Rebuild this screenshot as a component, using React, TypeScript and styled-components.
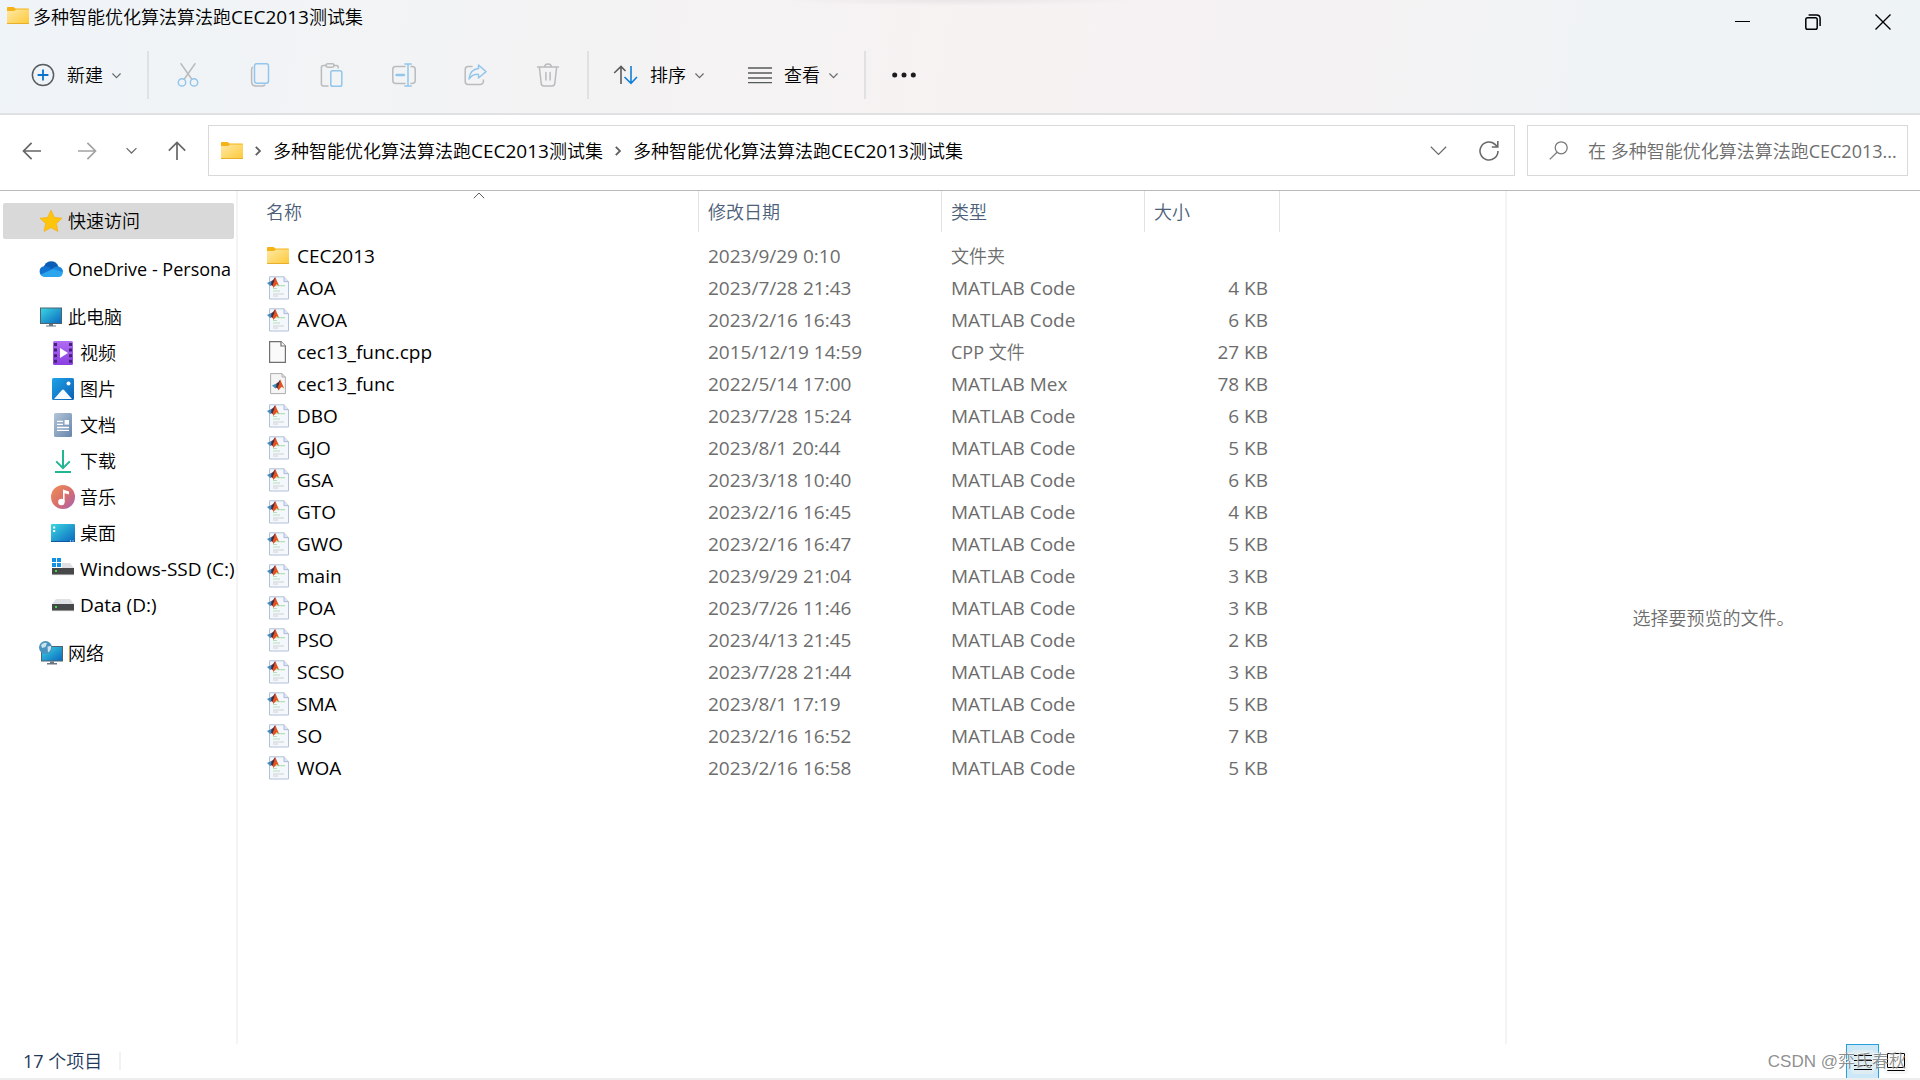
import React from "react";
import styled, { createGlobalStyle } from "styled-components";

const GlobalStyle = createGlobalStyle`
  *, *::before, *::after { box-sizing: border-box; }
  body {
    margin: 0;
    background: #fff;
    color: #000;
    font: 18px/24px "Open Sans", "Noto Sans CJK SC DemiLight", "Noto Sans CJK SC Light", "Noto Sans CJK SC", sans-serif;
  }
  button, input { font: inherit; color: inherit; }
  button { border: 0; background: none; padding: 0; }
  svg { display: block; flex: none; }
`;

/* ---------- layout ---------- */

const Window = styled.div`
  min-height: 100vh;
  display: flex;
  flex-direction: column;
  background: #fff;
  border-bottom: 2px solid #ededed;
`;

const Header = styled.header`
  height: 115px;
  background:
    radial-gradient(ellipse 180px 6px at 50% 0, #e9e5e6, transparent),
    linear-gradient(100deg, #eff4f8 0%, #f3f3f4 28%, #f7f2f2 52%, #f4f2f3 70%, #f0f3f5 82%, #eef3f6 100%);
  border-bottom: 2px solid #dfe1e2;
`;

const TitleBar = styled.div`
  height: 36px;
  display: flex;
  justify-content: space-between;
`;

const Title = styled.h1`
  margin: 0;
  padding: 3px 0 0 7px;
  display: flex;
  gap: 4px;
  font-size: 18px;
  font-weight: 400;
  line-height: 28px;
  svg { margin-top: 4px; }
`;

const WindowControls = styled.div`
  display: flex;
  padding-right: 2px;
`;

const WindowButton = styled.button`
  width: 70px;
  height: 43px;
  display: grid;
  place-items: center;
`;

const Toolbar = styled.div`
  height: 78px;
  padding-left: 31px;
  display: flex;
  align-items: center;
`;

const MenuButton = styled.button`
  height: 48px;
  display: flex;
  align-items: center;
  gap: 12px;
`;

const MenuLabel = styled.span`
  display: flex;
  align-items: center;
  gap: 9px;
`;

const IconGroup = styled.div`
  display: flex;
  padding: 0 3px;
`;

const IconButton = styled.button`
  width: 72px;
  height: 48px;
  display: grid;
  place-items: center;
`;

const Separator = styled.span`
  width: 2px;
  height: 48px;
  background: #e0e1e3;
  margin: 0 26px;
`;

const GroupSeparator = styled(Separator)<{ $before?: boolean }>`
  margin: ${(p) => (p.$before ? "0 0 0 26px" : "0 24px 0 0")};
`;

const ViewMenu = styled(MenuButton)`
  margin-left: 44px;
`;

const NavBar = styled.div`
  height: 76px;
  padding: 10px 12px 14px 0;
  display: flex;
  border-bottom: 1px solid #b9b9b9;
`;

const History = styled.div`
  width: 208px;
  display: grid;
  grid-template-columns: 64px 46px 42px 50px;
  button { display: grid; place-items: center; }
`;

const AddressBar = styled.div`
  flex: 1;
  min-width: 0;
  padding: 0 14px 0 12px;
  border: 1px solid #d9d9d9;
  display: flex;
  align-items: center;
`;

const Crumbs = styled.div`
  flex: 1;
  min-width: 0;
  display: flex;
  align-items: center;
  gap: 12px;
  white-space: nowrap;
`;

const AddressActions = styled.div`
  display: flex;
  gap: 31px;
`;

const SearchBox = styled.label`
  width: 381px;
  margin-left: 12px;
  padding-left: 21px;
  border: 1px solid #d9d9d9;
  display: flex;
  align-items: center;
  gap: 20px;
  input {
    flex: 1;
    min-width: 0;
    border: 0;
    padding: 0;
    background: none;
    outline: 0;
  }
  input::placeholder { color: #6d6d6d; opacity: 1; }
`;

const Body = styled.div`
  flex: 1;
  display: flex;
`;

const Sidebar = styled.nav`
  width: 238px;
  border-right: 2px solid #f4f4f4;
  padding: 12px 2px 0 3px;
  display: flex;
  flex-direction: column;
  gap: 12px;
`;

const TreeGroup = styled.ul`
  list-style: none;
  margin: 0;
  padding: 0;
`;

const TreeLink = styled.a<{ $nested?: boolean; $selected?: boolean }>`
  height: 36px;
  padding-left: ${(p) => (p.$nested ? 48 : 36)}px;
  display: flex;
  align-items: center;
  gap: 5px;
  color: #000;
  text-decoration: none;
  white-space: nowrap;
  border-radius: 2px;
  background: ${(p) => (p.$selected ? "#d9d9d9" : "transparent")};
`;

const FileArea = styled.main`
  flex: 1;
  min-width: 0;
`;

const FileTable = styled.table`
  width: 1042px;
  table-layout: fixed;
  border-collapse: collapse;
  td { height: 32px; padding: 0 0 0 9px; color: #6d6d6d; white-space: nowrap; }
  td:first-child { padding-left: 29px; color: #000; }
  td:last-child { padding: 0 12px 0 0; text-align: right; }
  th { height: 49px; padding: 0; vertical-align: top; font-weight: 400; }
`;

const ColumnButton = styled.button<{ $first?: boolean }>`
  position: relative;
  width: 100%;
  height: 41px;
  padding-left: ${(p) => (p.$first ? 28 : 9)}px;
  text-align: left;
  color: #4c607a;
  border-right: 1px solid #e2e2e2;
`;

const SortMark = styled.span`
  position: absolute;
  top: 1px;
  left: 51%;
`;

const FileName = styled.span`
  display: flex;
  align-items: center;
  gap: 6px;
`;

const Latin = styled.span`
  font-size: 19px;
`;

const Preview = styled.aside`
  width: 415px;
  border-left: 2px solid #f4f4f4;
  display: grid;
  place-items: center;
  color: #6d6d6d;
`;

const StatusBar = styled.footer`
  position: relative;
  height: 34px;
  padding: 0 8px 0 23px;
  display: flex;
  align-items: center;
  justify-content: space-between;
  color: #1e395b;
`;

const Count = styled.span`
  padding-right: 17px;
  border-right: 2px solid #f2f2f2;
  line-height: 18px;
`;

const ViewModes = styled.div`
  display: flex;
`;

const ViewButton = styled.button<{ $active?: boolean }>`
  width: 33px;
  height: 34px;
  display: grid;
  place-items: center;
  border: 1px solid ${(p) => (p.$active ? "#26a0da" : "transparent")};
  border-bottom: 0;
  background: ${(p) => (p.$active ? "#cce8f6" : "none")};
`;

const ModeIcon = styled.svg`
  padding: 3px;
  border-radius: 4px;
  background: rgba(240, 240, 240, 0.5);
`;

const Watermark = styled.span`
  position: absolute;
  right: 14px;
  top: 6px;
  color: rgba(130, 130, 130, 0.9);
  text-shadow: -1px -1px 0 rgba(255, 255, 255, 0.7);
  font-family: "Liberation Sans", "Noto Sans CJK SC DemiLight", "Noto Sans CJK SC", sans-serif;
  font-size: 17px;
  pointer-events: none;
`;

/* ---------- icons ---------- */

const FolderShape = () => (
  <>
    <defs>
      <linearGradient id="folder" x1="0" y1="0" x2="1" y2="1">
        <stop offset="0" stopColor="#ffe9a6" />
        <stop offset="1" stopColor="#fdc937" />
      </linearGradient>
    </defs>
    <path d="M0 1Q0 0 1 0H6.5L8.5 1.6H21Q22 1.6 22 2.6V9H0Z" fill="#f5b315" />
    <path d="M0 4H7L9 2.4H22V16.4Q22 17 21 17H1Q0 17 0 16Z" fill="url(#folder)" />
    <path d="M0 16H22V17H0Z" fill="#e9ae2c" />
  </>
);

const FolderIcon = () => (
  <svg width="22" height="18" viewBox="0 0 22 18">
    <FolderShape />
  </svg>
);

const FolderRowIcon = () => (
  <svg width="24" height="24" viewBox="0 -3 24 24">
    <FolderShape />
  </svg>
);

const ChevronDown = ({ size = 9, color = "#6a6a6a" }: { size?: number; color?: string }) => (
  <svg width={size} height={size} viewBox="0 0 10 10" fill="none" stroke={color} strokeWidth={12 / size}>
    <path d="M.5 2.8 5 7.3 9.5 2.8" />
  </svg>
);

const ChevronRight = () => (
  <svg width="6" height="10" viewBox="0 0 6 10" fill="none" stroke="#606060" strokeWidth="1.8">
    <path d="M.8.8 5 5 .8 9.2" />
  </svg>
);

const Tool = ({ children }: { children: React.ReactNode }) => (
  <svg width="24" height="24" viewBox="0 0 24 24" fill="none" stroke="#b9bbbd" strokeWidth="1.5" strokeLinecap="round" strokeLinejoin="round">
    {children}
  </svg>
);

const blue = "#92c6ec";

const tools = [
  {
    label: "剪切",
    icon: (
      <>
        <path d="M5 .8 15.8 16.2M19 .8 8.2 16.2" />
        <g stroke={blue}>
          <circle cx="6" cy="19.4" r="3.7" />
          <circle cx="18" cy="19.4" r="3.7" />
        </g>
      </>
    ),
  },
  {
    label: "复制",
    icon: (
      <>
        <path d="M4.5 4.2Q3.6 5 3.6 6.4V18.5Q3.6 23 8 23H14Q16 23 16.8 22" />
        <rect x="6.5" y=".8" width="14" height="19.4" rx="2.2" stroke={blue} />
      </>
    ),
  },
  {
    label: "粘贴",
    icon: (
      <>
        <path d="M6 2.5H3.4Q1.4 2.5 1.4 4.5V21Q1.4 23 3.4 23H8M14 2.5H16.5Q18.2 2.5 18.2 4.5V5" />
        <rect x="6" y=".8" width="8" height="3.4" rx="1.7" />
        <rect x="10.8" y="7.8" width="11" height="15.4" rx="1.8" stroke={blue} />
      </>
    ),
  },
  {
    label: "重命名",
    icon: (
      <>
        <path d="M13 3.6H3.6Q.8 3.6 .8 6.4V17.6Q.8 20.4 3.6 20.4H13M19 3.6H20.4Q23.2 3.6 23.2 6.4V17.6Q23.2 20.4 20.4 20.4H19" />
        <g stroke={blue}>
          <path d="M16 1V23M12.8.9H19.2M12.8 23.1H19.2" />
          <path d="M4.5 12H12" strokeWidth="2.4" />
        </g>
      </>
    ),
  },
  {
    label: "共享",
    icon: (
      <>
        <path d="M8 3.6H4.2Q1.2 3.6 1.2 6.6V18.4Q1.2 21.4 4.2 21.4H16Q19.4 21.4 19.4 18V17" />
        <path d="M14.5 2 22 8.6 14.5 15V11.4Q8.5 11 5 16 6 6.4 14.5 5.6Z" stroke={blue} />
      </>
    ),
  },
  {
    label: "删除",
    icon: (
      <path d="M1.5 3.9H22.5M8.6 3.6Q9 .9 12 .9T15.4 3.6M3.4 4.2 5.2 20.4Q5.5 23 8 23H16Q18.5 23 18.8 20.4L20.6 4.2M9.9 9.5V17M14.1 9.5V17" />
    ),
  },
];

const PlusIcon = () => (
  <svg width="24" height="24" viewBox="0 0 24 24" fill="none" strokeWidth="1.5">
    <circle cx="12" cy="12" r="10.6" stroke="#5a5c5e" />
    <path d="M12 6.6V17.4M6.6 12H17.4" stroke="#0a74cc" strokeWidth="1.8" />
  </svg>
);

const SortIcon = () => (
  <svg width="25" height="20" viewBox="0 0 25 20" fill="none" strokeWidth="1.6">
    <path d="M8 19V1.4M1.2 8 8 1.4 12.5 6" stroke="#5a5c5e" />
    <path d="M18 1V18.4M11.5 12 18 18.4 24 12" stroke="#1180d8" />
  </svg>
);

const ViewIcon = () => (
  <svg width="24" height="18" viewBox="0 0 24 18" stroke="#555b59" strokeWidth="1.4">
    <path d="M0 2H24M0 7H24M0 12H24M0 16.6H24" />
  </svg>
);

const MoreIcon = () => (
  <svg width="24" height="6" viewBox="0 0 24 6" fill="#1c1c1c">
    <circle cx="2.7" cy="3" r="2.5" />
    <circle cx="12" cy="3" r="2.5" />
    <circle cx="21.3" cy="3" r="2.5" />
  </svg>
);

const Arrow = ({ turn = 0, color = "#666" }: { turn?: number; color?: string }) => (
  <svg width="20" height="20" viewBox="0 0 20 20" fill="none" stroke={color} strokeWidth="1.7">
    <path d="M19 10H1.8M9.6 1.8 1.5 10 9.6 18.2" transform={`rotate(${turn} 10 10)`} />
  </svg>
);

const RefreshIcon = () => (
  <svg width="22" height="22" viewBox="0 0 22 22" fill="none" stroke="#6a6a6a" strokeWidth="1.6">
    <path d="M20 11A9 9 0 1 1 17.6 4.9L19.6 6.8M19.8 1V7H13.8" />
  </svg>
);

const SearchIcon = () => (
  <svg width="19" height="19" viewBox="0 0 19 19" fill="none" stroke="#7a7a7a" strokeWidth="1.3">
    <circle cx="12.2" cy="6.8" r="6" />
    <path d="M8 11.2.8 18.4" />
  </svg>
);

const StarIcon = () => (
  <svg width="24" height="24" viewBox="0 0 24 24">
    <path d="M12 1.2 15.3 8.4 23 9.3 17.3 14.6 18.9 22.4 12 18.6 5.1 22.4 6.7 14.6 1 9.3 8.7 8.4Z" fill="#ffc40c" stroke="#f7ae0a" strokeWidth=".7" strokeLinejoin="round" />
  </svg>
);

const CloudIcon = () => (
  <svg width="24" height="24" viewBox="0 0 24 24">
    <path d="M4 12Q6 4.5 12 4.3 17.5 4.3 19.4 9.5L15 14Z" fill="#0a5cb4" />
    <path d="M5 19.6A5.2 5.2 0 0 1 4 9.6Q8 8 13.5 12.5L16 14 8 19.8Z" fill="#1173cf" />
    <path d="M12.5 12.4Q15.5 8.8 19.5 9.5 24 10.8 24 15L20 18Z" fill="#1987dd" />
    <path d="M1.8 17.6 13.8 12 23.8 15Q24 20 19 20H5.5Q3 20 1.8 17.6Z" fill="#2aa5ee" />
  </svg>
);

const ScreenDefs = () => (
  <defs>
    <linearGradient id="screen" x1="0" y1="0" x2="1" y2="1">
      <stop offset="0" stopColor="#3bd7e2" />
      <stop offset="1" stopColor="#0a66bf" />
    </linearGradient>
  </defs>
);

const ComputerIcon = () => (
  <svg width="24" height="24" viewBox="0 0 24 24">
    <ScreenDefs />
    <rect x="1.5" y="3" width="21" height="15.5" fill="url(#screen)" stroke="#4d6470" />
    <path d="M10 19H14V20.5H17V21.6H7V20.5H10Z" fill="#6a7782" />
  </svg>
);

const VideoIcon = () => (
  <svg width="24" height="24" viewBox="0 0 24 24">
    <defs>
      <linearGradient id="video" x1="0" y1="0" x2="0" y2="1">
        <stop offset="0" stopColor="#b06cf2" />
        <stop offset="1" stopColor="#8a3fe0" />
      </linearGradient>
    </defs>
    <rect x="2" y="0" width="20" height="24" rx="1.5" fill="url(#video)" />
    <path d="M4.5 2V22M19.5 2V22" stroke="#43207c" strokeWidth="3" strokeDasharray="3 2.6" />
    <path d="M9 7 17 12 9 17Z" fill="#fff" />
  </svg>
);

const PictureIcon = () => (
  <svg width="24" height="24" viewBox="0 0 24 24">
    <defs>
      <linearGradient id="picture" x1="0" y1="0" x2="1" y2="1">
        <stop offset="0" stopColor="#1ea3ea" />
        <stop offset="1" stopColor="#0b5fb3" />
      </linearGradient>
    </defs>
    <rect x="1" y="1" width="22" height="22" rx="1.5" fill="url(#picture)" />
    <path d="M3 22 11 13Q12 12 13 13L21 22Z" fill="#f5faff" />
    <circle cx="17.5" cy="6.5" r="2" fill="#fff" />
  </svg>
);

const DocumentIcon = () => (
  <svg width="24" height="24" viewBox="0 0 24 24">
    <defs>
      <linearGradient id="document" x1="0" y1="0" x2="1" y2="1">
        <stop offset="0" stopColor="#b3c5d8" />
        <stop offset="1" stopColor="#6685ab" />
      </linearGradient>
    </defs>
    <rect x="3" y="0" width="18" height="24" rx="1.5" fill="url(#document)" />
    <path d="M6 8.3H12M6 11.4H12M6 14.5H18M6 17.3H18" stroke="#fff" strokeWidth="1.3" />
    <rect x="13.6" y="7" width="4.4" height="4.6" fill="#fff" />
  </svg>
);

const DownloadIcon = () => (
  <svg width="24" height="24" viewBox="0 0 24 24" fill="none" stroke="#22b592" strokeWidth="2">
    <path d="M12 1V19M5.2 12.4 12 19.2 18.8 12.4M4 23H20" />
  </svg>
);

const MusicIcon = () => (
  <svg width="24" height="24" viewBox="0 0 24 24">
    <defs>
      <linearGradient id="music" x1="0" y1="0" x2="1" y2="1">
        <stop offset="0" stopColor="#f09058" />
        <stop offset=".5" stopColor="#da7069" />
        <stop offset="1" stopColor="#a55fb5" />
      </linearGradient>
    </defs>
    <circle cx="12" cy="12" r="12" fill="url(#music)" />
    <path d="M12 4.4 18 6.4V9.6L13.6 8.2V17H12Z" fill="#fff" />
    <circle cx="10.4" cy="17" r="3.2" fill="#fff" />
  </svg>
);

const DesktopIcon = () => (
  <svg width="24" height="24" viewBox="0 0 24 24">
    <ScreenDefs />
    <rect x="0" y="3" width="24" height="18" rx="1" fill="url(#screen)" />
    <path d="M0 20.5H24" stroke="#0c5a9e" />
    <path d="M2.2 5.5H4.2V7.5H2.2ZM2.2 9H4.2V11H2.2ZM19 19.5H20V20.5H19ZM21.5 19.5H22.5V20.5H21.5Z" fill="#fff" />
  </svg>
);

const DriveIcon = ({ system = false }: { system?: boolean }) => (
  <svg width="24" height="24" viewBox="0 0 24 24">
    <path d="M5 6H19L23 11H1Z" fill="#dfe1e4" />
    <rect x="1" y="11" width="22" height="7" fill="#47484a" />
    <path d="M1 17.6H23" stroke="#9a9a9a" />
    <rect x="4" y="13" width="2" height="2" fill="#3ddc3d" />
    {system && (
      <>
        <rect x="0" y="0" width="11" height="11" fill="#fff" />
        <path d="M1 1H5V5H1ZM6 1H10V5H6ZM1 6H5V10H1ZM6 6H10V10H6Z" fill="#1290e4" />
      </>
    )}
  </svg>
);

const NetworkIcon = () => (
  <svg width="24" height="24" viewBox="0 0 24 24">
    <ScreenDefs />
    <rect x="2.5" y="5.5" width="21" height="14.5" fill="url(#screen)" stroke="#4d6470" />
    <path d="M11 20.5H15V22H18V23.4H8V22H11Z" fill="#6a7782" />
    <circle cx="6.5" cy="6.5" r="6.5" fill="#4b93bf" />
    <path d="M2 4Q5 .8 8 2L6.5 6 3 7ZM8.5 5.5 12 5Q12.5 9.5 9 11.5Z" fill="#c9e3ef" />
  </svg>
);

const Membrane = () => (
  <>
    <path d="M0 6.6 4.4 4.6 6.2 7.8 3.4 9.4Z" fill="#3c8cc4" />
    <path d="M4.4 4.6Q6.4 3.6 8.2.4L7.6 8 6 9.8 4.2 8.6Z" fill="#4a2a3a" />
    <path d="M8.2.4Q9.8 4.2 12.2 9.4L9.6 7.8 6.4 11.6 5.6 8.8Q7.4 5 8.2.4Z" fill="#e0531f" />
  </>
);

const MatlabFileIcon = () => (
  <svg width="24" height="24" viewBox="1 0 24 24">
    <path d="M3.5.8H18L22.5 5.6V23H3.5Z" fill="#f4f7fb" stroke="#b0c1d9" />
    <path d="M18 .8V5.6H22.5" fill="#dfe8f3" stroke="#a9bcd6" />
    <path d="M9 9.6H19M7 12.5H11M7 15H14" stroke="#b4e2b9" strokeWidth="1.2" />
    <path d="M7 18H18M7 20H12" stroke="#d0d2d6" strokeWidth="1.1" />
    <g transform="translate(1 .5)">
      <Membrane />
    </g>
  </svg>
);

const BlankFileIcon = () => (
  <svg width="24" height="24" viewBox="0 0 24 24" fill="#fafafa" stroke="#707070" strokeWidth="1.2">
    <path d="M2.6 1.6H14L18.4 6V22.4H2.6Z" />
    <path d="M14 1.6V6H18.4" />
  </svg>
);

const MexFileIcon = () => (
  <svg width="24" height="24" viewBox="0 0 24 24">
    <path d="M3.6 1.6H15L18.4 5V21.6H3.6Z" fill="#f5f5f5" stroke="#adadad" />
    <path d="M15 1.6V5H18.4" fill="none" stroke="#adadad" />
    <g transform="translate(5 7)">
      <Membrane />
    </g>
  </svg>
);

/* ---------- data ---------- */

const FolderName = () => (
  <span>
    多种智能优化算法算法跑<Latin>CEC2013</Latin>测试集
  </span>
);

type TreeItem = { label: string; icon: React.ReactNode; nested?: boolean; selected?: boolean; latin?: boolean };

const tree: TreeItem[][] = [
  [{ label: "快速访问", icon: <StarIcon />, selected: true }],
  [{ label: "OneDrive - Persona", icon: <CloudIcon /> }],
  [
    { label: "此电脑", icon: <ComputerIcon /> },
    { label: "视频", icon: <VideoIcon />, nested: true },
    { label: "图片", icon: <PictureIcon />, nested: true },
    { label: "文档", icon: <DocumentIcon />, nested: true },
    { label: "下载", icon: <DownloadIcon />, nested: true },
    { label: "音乐", icon: <MusicIcon />, nested: true },
    { label: "桌面", icon: <DesktopIcon />, nested: true },
    { label: "Windows-SSD (C:)", icon: <DriveIcon system />, nested: true, latin: true },
    { label: "Data (D:)", icon: <DriveIcon />, nested: true, latin: true },
  ],
  [{ label: "网络", icon: <NetworkIcon /> }],
];

const fileIcons = {
  文件夹: <FolderRowIcon />,
  "MATLAB Code": <MatlabFileIcon />,
  "CPP 文件": <BlankFileIcon />,
  "MATLAB Mex": <MexFileIcon />,
};

type FileKind = keyof typeof fileIcons;

const files: [string, string, FileKind, string][] = [
  ["CEC2013", "2023/9/29 0:10", "文件夹", ""],
  ["AOA", "2023/7/28 21:43", "MATLAB Code", "4 KB"],
  ["AVOA", "2023/2/16 16:43", "MATLAB Code", "6 KB"],
  ["cec13_func.cpp", "2015/12/19 14:59", "CPP 文件", "27 KB"],
  ["cec13_func", "2022/5/14 17:00", "MATLAB Mex", "78 KB"],
  ["DBO", "2023/7/28 15:24", "MATLAB Code", "6 KB"],
  ["GJO", "2023/8/1 20:44", "MATLAB Code", "5 KB"],
  ["GSA", "2023/3/18 10:40", "MATLAB Code", "6 KB"],
  ["GTO", "2023/2/16 16:45", "MATLAB Code", "4 KB"],
  ["GWO", "2023/2/16 16:47", "MATLAB Code", "5 KB"],
  ["main", "2023/9/29 21:04", "MATLAB Code", "3 KB"],
  ["POA", "2023/7/26 11:46", "MATLAB Code", "3 KB"],
  ["PSO", "2023/4/13 21:45", "MATLAB Code", "2 KB"],
  ["SCSO", "2023/7/28 21:44", "MATLAB Code", "3 KB"],
  ["SMA", "2023/8/1 17:19", "MATLAB Code", "5 KB"],
  ["SO", "2023/2/16 16:52", "MATLAB Code", "7 KB"],
  ["WOA", "2023/2/16 16:58", "MATLAB Code", "5 KB"],
];

const DropDown = ({ icon, label }: { icon: React.ReactNode; label: string }) => (
  <>
    {icon}
    <MenuLabel>
      {label}
      <ChevronDown />
    </MenuLabel>
  </>
);

export default function App() {
  return (
    <Window>
      <GlobalStyle />
      <Header>
        <TitleBar>
          <Title>
            <FolderIcon />
            <FolderName />
          </Title>
          <WindowControls>
            <WindowButton aria-label="最小化">
              <svg width="16" height="16" stroke="#000"><path d="M0 7.5H15" /></svg>
            </WindowButton>
            <WindowButton aria-label="还原">
              <svg width="16" height="16" fill="none" stroke="#000" strokeWidth="1.5">
                <rect x=".8" y="3.8" width="11.4" height="11.4" rx="1.8" />
                <path d="M3.6.9H11.5Q15.1.9 15.1 4.5V12" />
              </svg>
            </WindowButton>
            <WindowButton aria-label="关闭">
              <svg width="16" height="16" stroke="#000" strokeWidth="1.4"><path d="M.5.5 15.5 15.5M15.5.5.5 15.5" /></svg>
            </WindowButton>
          </WindowControls>
        </TitleBar>
        <Toolbar>
          <MenuButton><DropDown icon={<PlusIcon />} label="新建" /></MenuButton>
          <GroupSeparator $before />
          <IconGroup>
            {tools.map((t) => (
              <IconButton key={t.label} aria-label={t.label}>
                <Tool>{t.icon}</Tool>
              </IconButton>
            ))}
          </IconGroup>
          <GroupSeparator />
          <MenuButton><DropDown icon={<SortIcon />} label="排序" /></MenuButton>
          <ViewMenu><DropDown icon={<ViewIcon />} label="查看" /></ViewMenu>
          <Separator />
          <MenuButton aria-label="更多"><MoreIcon /></MenuButton>
        </Toolbar>
      </Header>

      <NavBar>
        <History>
          <button aria-label="后退"><Arrow /></button>
          <button aria-label="前进"><Arrow turn={180} color="#a3a3a3" /></button>
          <button aria-label="最近位置"><ChevronDown size={11} /></button>
          <button aria-label="上移"><Arrow turn={90} /></button>
        </History>
        <AddressBar>
          <Crumbs>
            <FolderIcon />
            <ChevronRight />
            <button><FolderName /></button>
            <ChevronRight />
            <button><FolderName /></button>
          </Crumbs>
          <AddressActions>
            <button aria-label="展开"><ChevronDown size={17} /></button>
            <button aria-label="刷新"><RefreshIcon /></button>
          </AddressActions>
        </AddressBar>
        <SearchBox>
          <SearchIcon />
          <input type="text" aria-label="搜索" placeholder="在 多种智能优化算法算法跑CEC2013..." />
        </SearchBox>
      </NavBar>

      <Body>
        <Sidebar>
          {tree.map((group, i) => (
            <TreeGroup key={i}>
              {group.map((item) => (
                <li key={item.label}>
                  <TreeLink href="#" $nested={item.nested} $selected={item.selected}>
                    {item.icon}
                    {item.latin ? <Latin>{item.label}</Latin> : <span>{item.label}</span>}
                  </TreeLink>
                </li>
              ))}
            </TreeGroup>
          ))}
        </Sidebar>

        <FileArea>
          <FileTable>
            <colgroup>
              <col width="461" />
              <col width="243" />
              <col width="203" />
              <col width="135" />
            </colgroup>
            <thead>
              <tr>
                <th>
                  <ColumnButton $first>
                    名称
                    <SortMark>
                      <svg width="12" height="7" fill="none" stroke="#606060"><path d="M.8 6.2 6 1 11.2 6.2" /></svg>
                    </SortMark>
                  </ColumnButton>
                </th>
                <th><ColumnButton>修改日期</ColumnButton></th>
                <th><ColumnButton>类型</ColumnButton></th>
                <th><ColumnButton>大小</ColumnButton></th>
              </tr>
            </thead>
            <tbody>
              {files.map(([name, date, kind, size]) => (
                <tr key={name}>
                  <td>
                    <FileName>
                      {fileIcons[kind]}
                      <Latin>{name}</Latin>
                    </FileName>
                  </td>
                  <td><Latin>{date}</Latin></td>
                  <td>{kind.startsWith("MATLAB") ? <Latin>{kind}</Latin> : kind}</td>
                  <td><Latin>{size}</Latin></td>
                </tr>
              ))}
            </tbody>
          </FileTable>
        </FileArea>

        <Preview>选择要预览的文件。</Preview>
      </Body>

      <StatusBar>
        <Count>17 个项目</Count>
        <ViewModes>
          <ViewButton $active aria-label="详细信息">
            <ModeIcon width="24" height="24" viewBox="0 0 18 18" stroke="#000"><path d="M0 2.5H18M0 7.5H18M0 12.5H18M0 16.5H18" /></ModeIcon>
          </ViewButton>
          <ViewButton aria-label="大缩略图">
            <ModeIcon width="24" height="24" viewBox="0 0 18 18" fill="none" stroke="#000"><path d="M.5.5H17.5V14.5H.5ZM0 17.5H18" /></ModeIcon>
          </ViewButton>
        </ViewModes>
        <Watermark>CSDN @弈氏春秋</Watermark>
      </StatusBar>
    </Window>
  );
}
